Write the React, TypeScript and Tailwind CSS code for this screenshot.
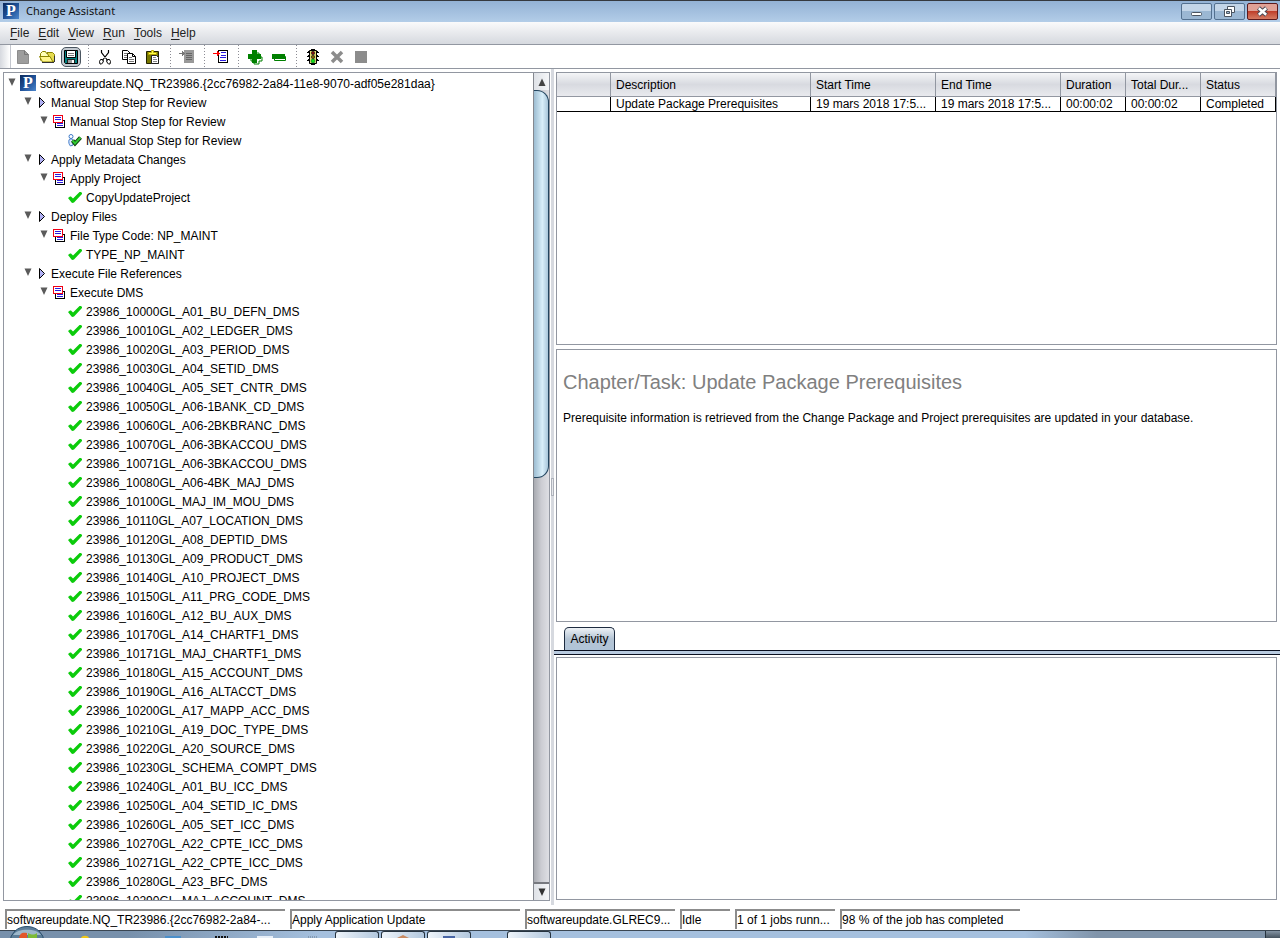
import type { ReactNode } from "react";

const dmsSteps = [
  "23986_10000GL_A01_BU_DEFN_DMS",
  "23986_10010GL_A02_LEDGER_DMS",
  "23986_10020GL_A03_PERIOD_DMS",
  "23986_10030GL_A04_SETID_DMS",
  "23986_10040GL_A05_SET_CNTR_DMS",
  "23986_10050GL_A06-1BANK_CD_DMS",
  "23986_10060GL_A06-2BKBRANC_DMS",
  "23986_10070GL_A06-3BKACCOU_DMS",
  "23986_10071GL_A06-3BKACCOU_DMS",
  "23986_10080GL_A06-4BK_MAJ_DMS",
  "23986_10100GL_MAJ_IM_MOU_DMS",
  "23986_10110GL_A07_LOCATION_DMS",
  "23986_10120GL_A08_DEPTID_DMS",
  "23986_10130GL_A09_PRODUCT_DMS",
  "23986_10140GL_A10_PROJECT_DMS",
  "23986_10150GL_A11_PRG_CODE_DMS",
  "23986_10160GL_A12_BU_AUX_DMS",
  "23986_10170GL_A14_CHARTF1_DMS",
  "23986_10171GL_MAJ_CHARTF1_DMS",
  "23986_10180GL_A15_ACCOUNT_DMS",
  "23986_10190GL_A16_ALTACCT_DMS",
  "23986_10200GL_A17_MAPP_ACC_DMS",
  "23986_10210GL_A19_DOC_TYPE_DMS",
  "23986_10220GL_A20_SOURCE_DMS",
  "23986_10230GL_SCHEMA_COMPT_DMS",
  "23986_10240GL_A01_BU_ICC_DMS",
  "23986_10250GL_A04_SETID_IC_DMS",
  "23986_10260GL_A05_SET_ICC_DMS",
  "23986_10270GL_A22_CPTE_ICC_DMS",
  "23986_10271GL_A22_CPTE_ICC_DMS",
  "23986_10280GL_A23_BFC_DMS",
  "23986_10290GL_MAJ_ACCOUNT_DMS",
];

type Kind = "root" | "chapter" | "task" | "step" | "manual";
type Row = { kind: Kind; label: string };

const rows: Row[] = [
  { kind: "root", label: "softwareupdate.NQ_TR23986.{2cc76982-2a84-11e8-9070-adf05e281daa}" },
  { kind: "chapter", label: "Manual Stop Step for Review" },
  { kind: "task", label: "Manual Stop Step for Review" },
  { kind: "manual", label: "Manual Stop Step for Review" },
  { kind: "chapter", label: "Apply Metadata Changes" },
  { kind: "task", label: "Apply Project" },
  { kind: "step", label: "CopyUpdateProject" },
  { kind: "chapter", label: "Deploy Files" },
  { kind: "task", label: "File Type Code: NP_MAINT" },
  { kind: "step", label: "TYPE_NP_MAINT" },
  { kind: "chapter", label: "Execute File References" },
  { kind: "task", label: "Execute DMS" },
  ...dmsSteps.map((label): Row => ({ kind: "step", label })),
];

function PLogo() {
  return (
    <svg width="16" height="17" viewBox="0 0 16 17" className="shrink-0" aria-hidden="true">
      <defs>
        <linearGradient id="plogo" x1="0" y1="0" x2="1" y2="1">
          <stop offset="0" stopColor="#0b2a5c" />
          <stop offset="0.5" stopColor="#1d4f96" />
          <stop offset="1" stopColor="#4d86cc" />
        </linearGradient>
      </defs>
      <rect width="16" height="16" fill="url(#plogo)" />
      <text x="3" y="13" fontFamily="Liberation Serif, serif" fontWeight="700" fontSize="16" fill="#fff">P</text>
    </svg>
  );
}

function Expander() {
  return (
    <svg width="8" height="11" viewBox="0 0 8 11" className="shrink-0" aria-hidden="true">
      <path d="M0.500 0.500h7L4 8z" fill="#5b5b5b" />
    </svg>
  );
}

function ChapterIcon() {
  return (
    <svg width="7" height="13" viewBox="0 0 7 13" className="shrink-0" aria-hidden="true">
      <path d="M1.500 1.500v10L6.500 6.500z" fill="#b0b0f4" stroke="#000" />
    </svg>
  );
}

function TaskIcon() {
  return (
    <svg width="12" height="13" viewBox="0 0 12 13" className="shrink-0" aria-hidden="true">
      <path d="M2 5h10v8H2z" fill="#000" />
      <path d="M3 6h8v6H3z" fill="#fff" />
      <path d="M4 8h6v1H4zM4 10h6v1H4z" fill="#2a1ae0" />
      <path d="M0 0h10v8H0z" fill="#f00014" />
      <path d="M1 1h8v6H1z" fill="#fff" />
      <path d="M2 2h6v1H2zM2 4h6v1H2z" fill="#2a1ae0" />
    </svg>
  );
}

function StepIcon() {
  return (
    <svg width="14" height="13" viewBox="0 0 14 13" className="shrink-0" aria-hidden="true">
      <path d="M0 7l2-1.500h1l2 2L11.500 1H13l1 1v1L6 11.500 4.500 12 3.500 11.500z" fill="#0bcb0b" />
    </svg>
  );
}

function ManualIcon() {
  return (
    <svg width="14" height="13" viewBox="0 0 14 13" className="shrink-0" aria-hidden="true">
      <circle cx="3" cy="2.500" r="2" fill="#fff" stroke="#3e7ac8" />
      <path d="M1 6c0-1.500 4-1.500 4 0v5L2.500 12C1 10.500 0.500 8.500 1 6z" fill="#dfeaff" stroke="#3e7ac8" />
      <path d="M4.500 6.500l2.500 3L12.500 3.500" fill="none" stroke="#0a3d0a" strokeWidth="4" />
      <path d="M4.500 6.500l2.500 3L12.500 3.500" fill="none" stroke="#32c832" strokeWidth="2" />
    </svg>
  );
}

const indent: Record<Kind, string> = {
  root: "pl-1 gap-1",
  chapter: "pl-5 gap-1.5",
  task: "pl-9 gap-[5px]",
  step: "pl-16 gap-1",
  manual: "pl-16 gap-1",
};

function TreeRow({ kind, label }: Row) {
  return (
    <li className={"flex h-[19px] items-center whitespace-nowrap " + indent[kind]}>
      {kind === "root" && <><Expander /><PLogo /></>}
      {kind === "chapter" && <><Expander /><ChapterIcon /></>}
      {kind === "task" && <><Expander /><TaskIcon /></>}
      {kind === "step" && <StepIcon />}
      {kind === "manual" && <ManualIcon />}
      <span>{label}</span>
    </li>
  );
}

function Tool({ label, active, children }: { label: string; active?: boolean; children: ReactNode }) {
  return (
    <button type="button" aria-label={label} className="flex h-full w-6 shrink-0 items-center justify-center">
      <span
        className={
          "flex h-5 w-5 shrink-0 items-center justify-center " +
          (active ? "rounded-[5px] border border-[#4a5560] bg-[#c3c9d0]" : "")
        }
      >
        <svg width="16" height="16" viewBox="0 0 16 16" className="shrink-0" aria-hidden="true">
          {children}
        </svg>
      </span>
    </button>
  );
}

function Divider() {
  return (
    <div className="flex h-full w-2.5 shrink-0 justify-center">
      <div className="w-px bg-[repeating-linear-gradient(to_bottom,#8c8c94_0_1px,#ffffff_1px_3px)]" />
    </div>
  );
}

function Toolbar() {
  return (
    <div role="toolbar" aria-label="Main" className="flex h-6 shrink-0 border-b border-[#9297a1] bg-white">
      <div className="w-[11px] border-r border-[#c3c6ce] bg-linear-to-r from-[#d6d9df] to-white" />
      <Tool label="New">
        <path d="M2.500 1.500h7l4 4v9h-11z" fill="#9d9d9d" stroke="#8c8c8c" />
        <path d="M9.500 1.500v4h4" fill="none" stroke="#777" />
      </Tool>
      <Tool label="Open">
        <path d="M1.500 11.500V4.500l2-2h3l1 2h5v4" fill="#ffffb8" stroke="#8a8400" />
        <path d="M8 3.500h5.500l2 2v6.500l-3 1z" fill="#e6dc50" stroke="#8a8400" />
        <path d="M0.500 7.500h10.500l3 5.500H3.500z" fill="#fff68a" stroke="#8a8400" />
        <path d="M3 13.500h12M15.500 7v6" stroke="#333" />
      </Tool>
      <Tool label="Save" active>
        <path d="M1.500 1.500h13v13H2.500l-1-1z" fill="#008080" stroke="#000" />
        <path d="M3.500 1.500h9v7h-9z" fill="#fff" stroke="#000" />
        <path d="M5 4.500h6M5 6.500h6" stroke="#777" />
        <path d="M4 10h8v4H4z" fill="#222" />
        <path d="M5 11h4v3H5z" fill="#9a9a9a" />
        <path d="M9 11h2v3H9z" fill="#fff" />
      </Tool>
      <Divider />
      <Tool label="Cut">
        <path d="M4.500 1v2.500L9.500 10l1 1.500M11.500 1v2.500L6.500 10l-1 1.500" fill="none" stroke="#000" strokeWidth="1.200" />
        <path d="M3.500 10.500h2l1 1.500-1 2-1 1h-1.500l-.5-2.500zM12.500 10.500h-2l-1 1.500 1 2 1 1H13l.5-2.500z" fill="none" stroke="#000" />
      </Tool>
      <Tool label="Copy">
        <path d="M1.500 1.500h5l3 3v6h-8z" fill="#fff" stroke="#000" />
        <path d="M3 4.500h3M3 6.500h5M3 8.500h5" stroke="#777" />
        <path d="M6.500 4.500h5l3 3v7h-8z" fill="#fff" stroke="#000" />
        <path d="M11.500 4.500v3h3" fill="none" stroke="#000" />
        <path d="M8 8.500h3M8 10.500h5M8 12.500h5" fill="none" stroke="#777" />
      </Tool>
      <Tool label="Paste">
        <path d="M1.500 2.500h12v12h-12z" fill="#777700" stroke="#222200" />
        <path d="M6.500 1.500h2v2h3v2h-8v-2h3z" fill="#ffff4a" stroke="#b8a800" />
        <path d="M6.500 6.500h5l2 2v6h-7z" fill="#fff" stroke="#222" />
        <path d="M8 8.500h3M8 10.500h4M8 12.500h4" stroke="#888" />
      </Tool>
      <Divider />
      <Tool label="Insert step">
        <path d="M5 1h10v13H5z" fill="#999" />
        <path d="M7 4h6v1H7zM7 6h6v1H7zM7 8h6v1H7zM7 10h6v1H7z" fill="#666" />
        <path d="M0 4h6v1H0zM3 2h1v5H3zM4 3h1v3H4z" fill="#777" />
      </Tool>
      <Divider />
      <Tool label="Insert task">
        <path d="M5 1h10v13H5z" fill="#000" />
        <path d="M6 2h8v11H6z" fill="#fff" />
        <path d="M8 3h5v1H8zM8 6h5v1H8zM7 8h6v1H7zM7 11h6v1H7z" fill="#2a1ae0" />
        <path d="M0 4h4V2h1v1h1v1h1v1H6v1H5v1H4V5H0z" fill="#f00" />
      </Tool>
      <Divider />
      <Tool label="Expand all">
        <path d="M7 4h5v4h3v4h-3v3H7v-3H4V8" fill="#fff" stroke="#008000" />
        <path d="M5 1h5v4h4v5h-4v4H5v-4H1V5h4z" fill="#008000" />
      </Tool>
      <Tool label="Collapse all">
        <path d="M3.500 7.500h11v4h-11z" fill="#fff" stroke="#008000" />
        <path d="M1 5h13v5H1z" fill="#008000" />
      </Tool>
      <Divider />
      <Tool label="Start">
        <path d="M2 3.500h12M2 7.500h12M2 11.500h12" stroke="#000" />
        <path d="M3 2h1v2H3zM12 2h1v2h-1zM3 6h1v2H3zM12 6h1v2h-1zM3 10h1v2H3zM12 10h1v2h-1z" fill="#000" />
        <path d="M4.500 1.500h7v13h-7z" fill="#e8e070" stroke="#000" />
        <path d="M6 0.500h4M6 15.500h4" stroke="#000" />
        <circle cx="8" cy="4" r="1.700" fill="#801010" stroke="#222" strokeWidth="0.700" />
        <circle cx="8" cy="8" r="1.700" fill="#806000" stroke="#222" strokeWidth="0.700" />
        <circle cx="8" cy="12" r="1.900" fill="#10e010" stroke="#073" strokeWidth="0.700" />
      </Tool>
      <Tool label="Cancel">
        <path d="M3 3l10 10M13 3L3 13" stroke="#8c8c8c" strokeWidth="3.500" />
      </Tool>
      <Tool label="Stop">
        <path d="M2 2h12v12H2z" fill="#8c8c8c" />
      </Tool>
    </div>
  );
}

function TitleBar() {
  const base = "flex h-[17px] w-[31px] items-center justify-center rounded-[2px] border ";
  const glass = base + "border-[#53708f] bg-linear-to-b from-[#c3d5e8] from-50% to-[#9bb7d3] to-50%";
  return (
    <header className="flex h-[22px] shrink-0 items-center border-t border-[#35393f] bg-linear-to-b from-[#93b2d5] to-[#b3cde8] pr-0.5 pl-[3px] font-['Noto_Sans',sans-serif]">
      <PLogo />
      <h1 className="ml-[7px] flex-1 text-[11px] text-[#111]">Change Assistant</h1>
      <div className="flex gap-0.5">
        <button type="button" aria-label="Minimize" className={glass}>
          <svg width="12" height="10" viewBox="0 0 12 10"><rect x="0.500" y="5.500" width="10" height="3" rx="1" fill="#fff" stroke="#4b5460" /></svg>
        </button>
        <button type="button" aria-label="Restore" className={glass}>
          <svg width="13" height="11" viewBox="0 0 13 11">
            <path d="M4.500 0.500h7v6h-7z" fill="#fff" stroke="#4b5460" />
            <path d="M1.500 3.500h7v7h-7z" fill="#fff" stroke="#4b5460" />
            <path d="M3.500 5.500h3v2h-3z" fill="#9bb7d3" stroke="#4b5460" />
          </svg>
        </button>
        <button
          type="button"
          aria-label="Close"
          className={base + "border-[#5c1a1c] bg-linear-to-b from-[#e0a196] from-45% via-[#bf3f2b] via-50% to-[#d57a62]"}
        >
          <svg width="13" height="11" viewBox="0 0 13 11">
            <path d="M2.500 2l8 7M10.500 2l-8 7" stroke="#4b4a55" strokeWidth="4.500" />
            <path d="M2.800 2.300l7.400 6.400M10.200 2.300L2.800 8.700" stroke="#fff" strokeWidth="2.500" />
          </svg>
        </button>
      </div>
    </header>
  );
}

function MenuBar() {
  return (
    <nav aria-label="Menu" className="flex h-[23px] shrink-0 items-center gap-px border-b border-[#9297a1] bg-linear-to-b from-[#fafafb] to-[#d6d9df] pl-1.5 text-[#222]">
      {["File", "Edit", "View", "Run", "Tools", "Help"].map((item) => (
        <button key={item} type="button" className="px-1">
          <span className="underline underline-offset-2">{item[0]}</span>
          {item.slice(1)}
        </button>
      ))}
    </nav>
  );
}

function ScrollBar() {
  return (
    <div className="flex w-4 shrink-0 flex-col border-l border-[#85888f] bg-linear-to-r from-[#a9abb1] via-[#cccdd3] to-[#dedfe4]">
      <button type="button" aria-label="Scroll up" className="flex h-[17px] shrink-0 items-center justify-center bg-linear-to-r from-[#dfe2e7] to-[#f5f6f8]">
        <svg width="8" height="8" viewBox="0 0 8 8"><path d="M4 0.500L7.500 8h-7z" fill="#444" /></svg>
      </button>
      <div className="flex min-h-0 flex-1 flex-col">
        <div className="h-[49%] rounded-r-[12px] border border-l-0 border-[#22455f] bg-linear-to-r from-[#9dbdd2] via-[#d9effa] via-60% to-[#a9c6da]" />
      </div>
      <button type="button" aria-label="Scroll down" className="flex h-[18px] shrink-0 items-center justify-center border-t-2 border-[#77797f] bg-linear-to-r from-[#dfe2e7] to-[#f5f6f8]">
        <svg width="8" height="8" viewBox="0 0 8 8"><path d="M0.500 0.500h7L4 8z" fill="#333" /></svg>
      </button>
    </div>
  );
}

const columns = ["", "Description", "Start Time", "End Time", "Duration", "Total Dur...", "Status"];
const record = ["", "Update Package Prerequisites", "19 mars 2018 17:5...", "19 mars 2018 17:5...", "00:00:02", "00:00:02", "Completed"];

function JobTable() {
  return (
    <table className="w-full table-fixed border-separate border-spacing-0 text-left">
      <colgroup>
        <col className="w-[54px]" />
        <col className="w-[200px]" />
        <col className="w-[125px]" />
        <col className="w-[125px]" />
        <col className="w-[65px]" />
        <col className="w-[75px]" />
        <col />
      </colgroup>
      <thead>
        <tr>
          {columns.map((name) => (
            <th key={name} scope="col" className="h-6 overflow-hidden border-r border-b border-[#9297a1] bg-linear-to-b from-[#f4f5f7] via-[#d8dae0] to-[#e9eaee] p-0 pl-[5px] font-normal whitespace-nowrap">
              {name}
            </th>
          ))}
        </tr>
      </thead>
      <tbody>
        <tr>
          {record.map((value, i) => (
            <td key={columns[i]} className="h-[15px] overflow-hidden border-r border-b border-black p-0 pl-[5px] leading-[14px] whitespace-nowrap">
              {value}
            </td>
          ))}
        </tr>
      </tbody>
    </table>
  );
}

const statusFields: [string, string][] = [
  ["w-[280px]", "softwareupdate.NQ_TR23986.{2cc76982-2a84-..."],
  ["w-[230px]", "Apply Application Update"],
  ["w-[150px]", "softwareupdate.GLREC9..."],
  ["w-[50px]", "Idle"],
  ["w-[100px]", "1 of 1 jobs runn..."],
  ["w-[180px]", "98 % of the job has completed"],
];

function TaskBar() {
  const task = "h-full rounded-t-[3px] border border-b-0 border-[#26333f] bg-linear-to-r from-[#eef4fa] to-[#b3c8de] ";
  return (
    <footer className="flex h-2 shrink-0 border-t border-[#3a4652] bg-linear-to-r from-[#7790ab] from-10% via-[#a5c0de] via-25% to-[#a5c0de] to-80%">
      <div className="flex w-[335px] shrink-0 items-end">
        <svg width="335" height="12" viewBox="0 0 335 12" className="shrink-0" aria-hidden="true">
          <ellipse cx="27" cy="16" rx="17" ry="15.500" fill="#5c7d98" stroke="#284f6d" />
          <path d="M13 9c4-7 24-7 28 0z" fill="#9db8cb" />
          <path d="M19 12c1-5 3-6 8-5v5z" fill="#e2572b" />
          <path d="M28 7c4 2 6 2 9 0v5h-9z" fill="#7cbb37" />
          <path d="M81 12c1-3 7-3 8 0z" fill="#f0c818" />
          <path d="M165 10h16v2h-16z" fill="#4b8fca" />
          <path d="M215 11h13" stroke="#111" strokeWidth="2" strokeDasharray="2 1" />
          <path d="M257 10h16v2h-16z" fill="#e7eff8" />
          <path d="M308 11h10" stroke="#66788b" strokeDasharray="1 1" />
        </svg>
      </div>
      <div className={task + "w-11"} />
      <div className={task + "ml-0.5 flex w-11 items-end justify-center"}>
        <svg width="12" height="3"><path d="M0 3l6-3 6 3z" fill="#c98b63" /></svg>
      </div>
      <div className={task + "ml-0.5 flex w-11 items-end justify-center"}>
        <svg width="12" height="2"><path d="M0 0h12v2H0z" fill="#4865a5" /></svg>
      </div>
      <div className={task + "ml-9 w-11"} />
      <div className="ml-auto w-[240px] bg-linear-to-r from-[#a5c0de] to-[#8094aa] to-30%" />
      <div className="w-[15px] border-l border-[#26333f] bg-linear-to-b from-[#8494a4] to-[#46535f]" />
    </footer>
  );
}

export default function App() {
  return (
    <div className="flex h-screen flex-col overflow-hidden bg-white font-['Liberation_Sans',Arial,sans-serif] text-xs text-black">
      <TitleBar />
      <MenuBar />
      <Toolbar />
      <main className="flex min-h-0 flex-1 pl-[3px]">
        <section aria-label="Steps" className="mt-[3px] mb-1 flex min-w-0 flex-[545] border border-[#9297a1]">
          <ul className="min-h-0 flex-1 overflow-hidden pt-px">
            {rows.map((row, i) => (
              <TreeRow key={i} {...row} />
            ))}
          </ul>
          <ScrollBar />
        </section>
        <div className="ml-px flex w-[3px] shrink-0 items-center bg-[#d6d9df]">
          <div className="h-[18px] w-[3px] border border-[#aeb2bb] bg-[#e6e8ec]" />
        </div>
        <div className="flex min-w-0 flex-[726] flex-col pt-[3px] pb-[5px]">
          <section aria-label="Jobs" className="mr-[3px] ml-0.5 min-h-0 flex-[274] overflow-hidden border border-[#9297a1]">
            <JobTable />
          </section>
          <section aria-label="Documentation" className="mt-1 mr-[3px] ml-0.5 min-h-0 flex-[274] overflow-hidden border border-[#9297a1] px-1.5">
            <h2 className="mt-5 text-xl leading-6 text-[#808080]">Chapter/Task: Update Package Prerequisites</h2>
            <p className="mt-4 leading-4">
              Prerequisite information is retrieved from the Change Package and Project prerequisites are updated in your database.
            </p>
          </section>
          <div role="tablist" className="mt-[5px] flex h-[23px] shrink-0 pl-2.5">
            <button
              type="button"
              role="tab"
              aria-selected="true"
              className="w-[51px] rounded-t-[5px] border border-b-0 border-[#1d2b40] bg-linear-to-b from-[#eef2f6] via-[#b4c4d4] via-50% to-[#b0c4d8]"
            >
              Activity
            </button>
          </div>
          <div className="h-[5px] shrink-0 border-y border-[#0b1020] bg-[#b9cbe0]" />
          <section aria-label="Activity" className="mt-0.5 mr-[3px] ml-0.5 min-h-0 flex-[243] border border-[#9297a1]" />
        </div>
      </main>
      <div role="status" className="flex h-[25px] shrink-0 gap-[5px] pt-1 pl-[5px]">
        {statusFields.map(([width, text]) => (
          <div key={text} className={"flex h-5 shrink-0 items-center overflow-hidden border-t-2 border-l-2 border-[#8c8c8c] whitespace-nowrap " + width}>
            {text}
          </div>
        ))}
      </div>
      <TaskBar />
    </div>
  );
}
